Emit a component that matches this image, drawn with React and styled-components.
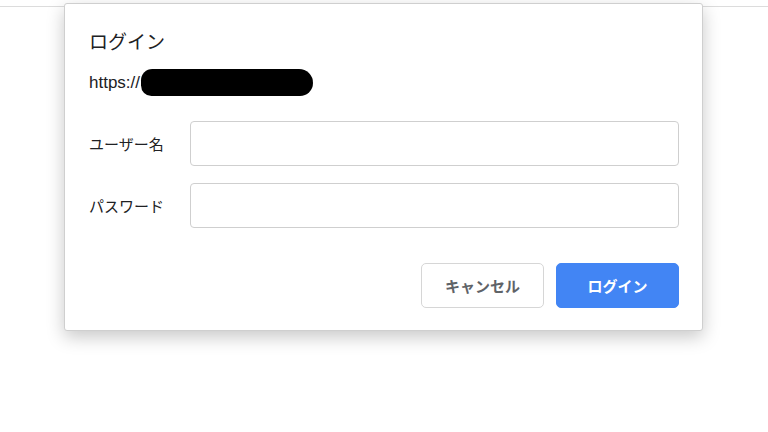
import React from "react";
import styled, { createGlobalStyle } from "styled-components";

const GlobalStyle = createGlobalStyle`
  html, body {
    margin: 0;
    background: #ffffff;
    font-family: "Liberation Sans", "Noto Sans CJK JP", sans-serif;
  }
`;

const Page = styled.div`
  position: relative;
  width: 768px;
  height: 432px;
  overflow: hidden;
`;

const TopBar = styled.div`
  height: 6px;
  border-bottom: 1px solid #dcdcdc;
`;

const Dialog = styled.div`
  position: absolute;
  top: 3px;
  left: 64px;
  width: 639px;
  height: 328px;
  box-sizing: border-box;
  padding: 27px 23px 0 24px;
  background: #fff;
  border: 1px solid #cfcfcf;
  border-radius: 3px;
  box-shadow: 0 6px 18px rgba(0, 0, 0, 0.22);
  display: flex;
  flex-direction: column;
`;

const Title = styled.div`
  font-size: 19px;
  line-height: 24px;
  color: #202124;
`;

const Origin = styled.div`
  margin-top: 14px;
  font-size: 17px;
  line-height: 20px;
  color: #202124;
  display: flex;
  align-items: center;
`;

const Redaction = styled.span`
  display: inline-block;
  width: 172px;
  height: 27px;
  margin-left: 1px;
  background: #000;
  border-radius: 13px 16px 15px 12px;
`;

const Form = styled.div`
  margin-top: 25px;
  display: flex;
  flex-direction: column;
  gap: 17px;
`;

const Row = styled.div`
  display: flex;
  align-items: center;
`;

const Label = styled.label`
  width: 101px;
  flex-shrink: 0;
  font-size: 15px;
  color: #202124;
`;

const Input = styled.input`
  flex: 1;
  height: 45px;
  box-sizing: border-box;
  border: 1px solid #cfcfcf;
  border-radius: 4px;
  background: #fff;
  outline: none;
  padding: 0 10px;
  font-size: 15px;
`;

const Actions = styled.div`
  margin-top: 35px;
  display: flex;
  justify-content: flex-end;
  gap: 12px;
`;

const Button = styled.button`
  width: 123px;
  height: 45px;
  box-sizing: border-box;
  border-radius: 5px;
  font-family: "Liberation Sans", "Noto Sans CJK JP", sans-serif;
  font-size: 15px;
  font-weight: bold;
  cursor: pointer;
  border: 1px solid ${p => (p.primary ? "#4285f4" : "#d6d6d6")};
  background: ${p => (p.primary ? "#4285f4" : "#fff")};
  color: ${p => (p.primary ? "#fff" : "#5f6368")};
`;

export default function App() {
  return (
    <Page>
      <GlobalStyle />
      <TopBar />
      <Dialog>
        <Title>ログイン</Title>
        <Origin>
          https://
          <Redaction />
        </Origin>
        <Form>
          <Row>
            <Label>ユーザー名</Label>
            <Input type="text" />
          </Row>
          <Row>
            <Label>パスワード</Label>
            <Input type="password" />
          </Row>
        </Form>
        <Actions>
          <Button>キャンセル</Button>
          <Button primary>ログイン</Button>
        </Actions>
      </Dialog>
    </Page>
  );
}
